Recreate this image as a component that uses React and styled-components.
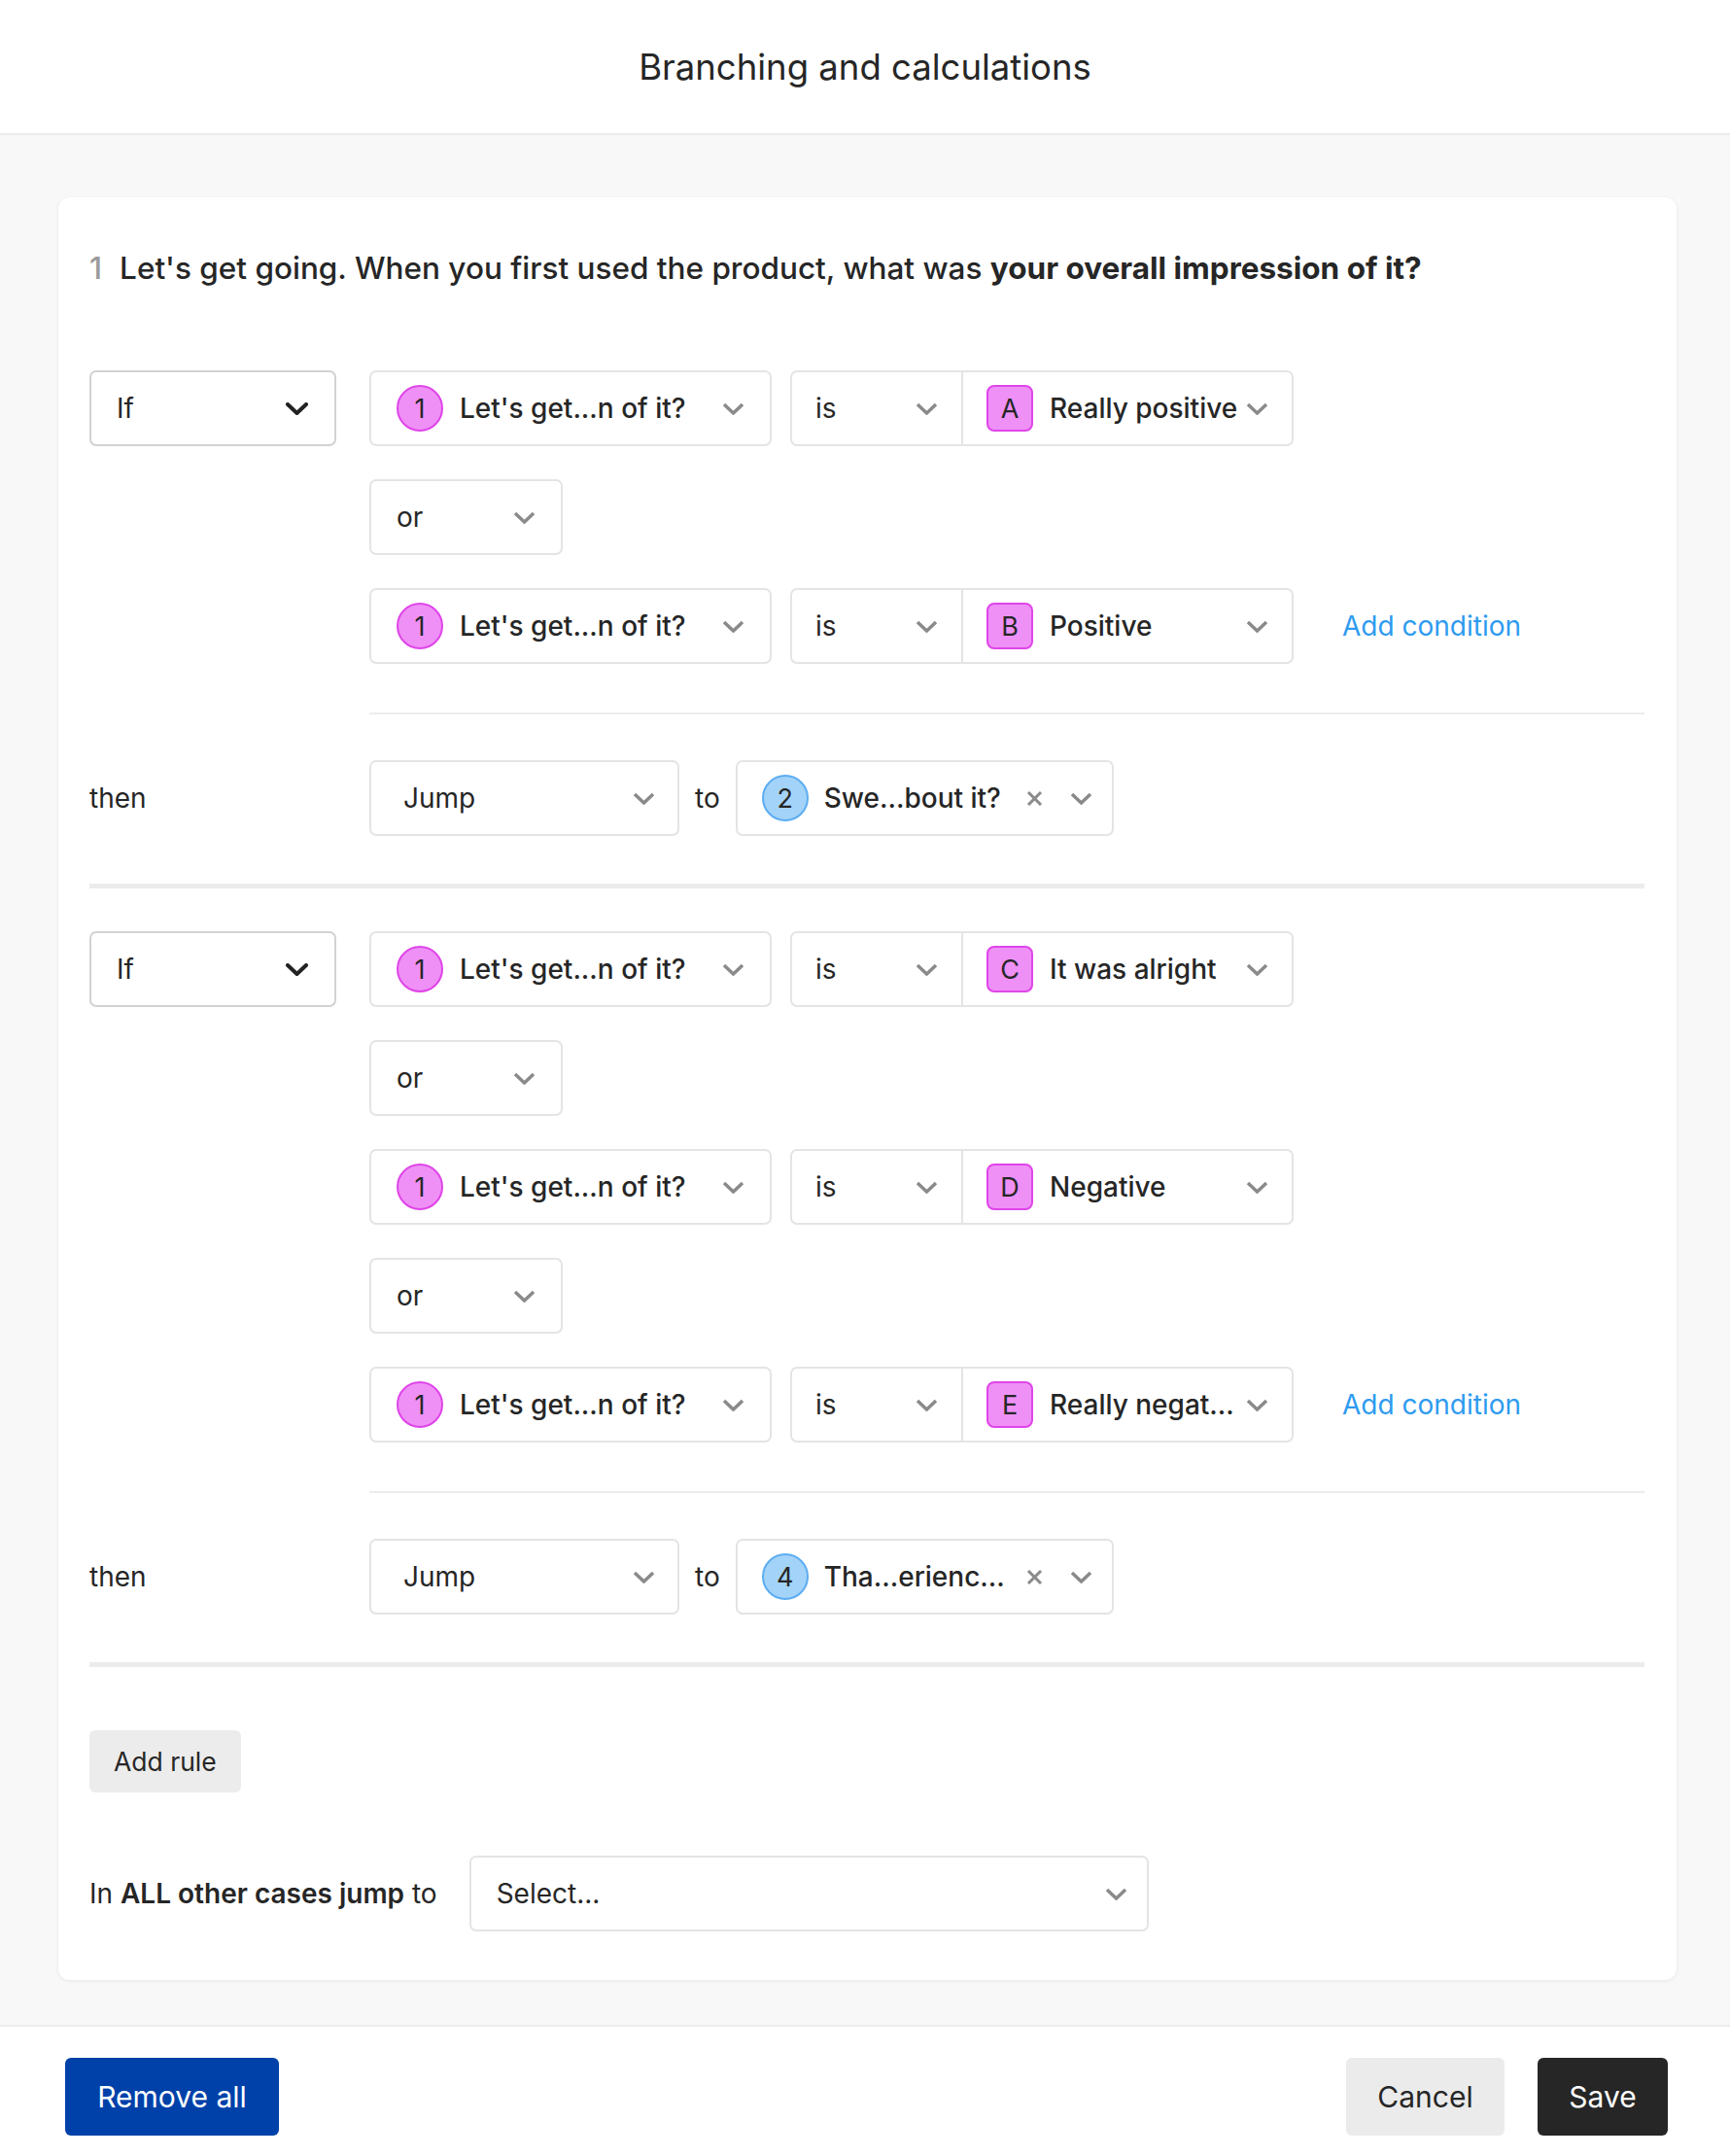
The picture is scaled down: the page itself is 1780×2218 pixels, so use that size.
import React from 'react'
import styled, { createGlobalStyle } from 'styled-components'

const GlobalStyle = createGlobalStyle`
  body {
    margin: 0;
    background: #f8f8f8;
    font-family: Inter, "Noto Sans", sans-serif;
    color: #262626;
  }
`

const Page = styled.div`
  display: flex;
  flex-direction: column;
  min-height: 2218px;
`

const Header = styled.header`
  height: 137px;
  background: #fff;
  border-bottom: 2px solid #ececec;
  display: flex;
  align-items: center;
  justify-content: center;
`

const Title = styled.h1`
  margin: 0;
  font-size: 36.5px;
  font-weight: 400;
  color: #262626;
`

const Main = styled.main`
  flex: 1;
  padding: 64px 55px 45px 60px;
`

const Card = styled.section`
  background: #fff;
  border-radius: 12px;
  box-shadow: 0 1px 4px rgba(0, 0, 0, 0.07);
  padding: 53px 33px 50px 32px;
`

const Question = styled.h2`
  margin: 0 0 85px;
  font-size: 31.5px;
  line-height: 40px;
  font-weight: 500;
  color: #262626;
  white-space: nowrap;

  b {
    font-weight: 700;
  }
`

const QNum = styled.span`
  color: #9b9b9b;
  margin-right: 18px;
`

const RuleBlock = styled.div`
  display: flex;
  flex-direction: column;
`

const RuleGrid = styled.div`
  display: grid;
  grid-template-columns: 288px 1fr;
  align-items: start;
`

const Conditions = styled.div`
  display: flex;
  flex-direction: column;
  gap: 34px;
`

const ConditionRow = styled.div`
  display: flex;
  align-items: center;
  gap: 19px;
`

const SelectBox = styled.div`
  box-sizing: border-box;
  display: flex;
  align-items: center;
  width: ${p => p.$w};
  height: 78px;
  padding: 0 ${p => p.$pr || '26px'} 0 ${p => p.$pl || '26px'};
  border: 2px solid ${p => (p.$strong ? '#d2d2d2' : '#e4e4e4')};
  border-radius: 7px;
  background: #fff;
  font-size: 28px;
  font-weight: ${p => (p.$medium ? 500 : 400)};
  color: #262626;
  flex-shrink: 0;
`

const Compare = styled.div`
  box-sizing: border-box;
  display: flex;
  width: 518px;
  height: 78px;
  border: 2px solid #e4e4e4;
  border-radius: 7px;
  background: #fff;
  font-size: 28px;
  flex-shrink: 0;
`

const ComparePart = styled.div`
  box-sizing: border-box;
  display: flex;
  align-items: center;
  width: ${p => p.$w || 'auto'};
  flex: ${p => (p.$w ? '0 0 auto' : '1')};
  padding: 0 24px 0 ${p => p.$pl || '24px'};
  font-weight: ${p => (p.$medium ? 500 : 400)};
  border-right: ${p => (p.$divider ? '2px solid #e4e4e4' : 'none')};
  min-width: 0;
`

const Text = styled.span`
  flex: 1;
  min-width: 0;
  padding-right: 8px;
  white-space: nowrap;
  overflow: hidden;
`

const Badge = styled.span`
  box-sizing: border-box;
  display: inline-flex;
  align-items: center;
  justify-content: center;
  width: 48px;
  height: 48px;
  flex-shrink: 0;
  margin-right: ${p => p.$gap || '17px'};
  border-radius: ${p => (p.$square ? '8px' : '50%')};
  border: 2px solid ${p => (p.$blue ? '#5cadf2' : '#df45e9')};
  background: ${p => (p.$blue ? '#a3d3f8' : '#ef90f6')};
  font-size: 27px;
  font-weight: 400;
  color: #262626;
`

const AddLink = styled.a`
  margin-left: 31px;
  font-size: 28px;
  color: #2e9bf0;
  cursor: pointer;
  white-space: nowrap;
`

const Divider = styled.div`
  height: 2px;
  background: #ececec;
  margin: ${p => p.$top} 0 47px 288px;
`

const ThenRow = styled.div`
  display: grid;
  grid-template-columns: 288px 1fr;
  align-items: center;
  font-size: 28px;
`

const Target = styled.div`
  display: flex;
  align-items: center;
  gap: 16px;
`

const RuleSeparator = styled.div`
  height: 5px;
  background: #ececec;
  margin: 49px 0 ${p => p.$bottom};
`

const GrayButton = styled.button`
  align-self: flex-start;
  height: 64px;
  margin-top: 65px;
  padding: 0 25px;
  border: none;
  border-radius: 6px;
  background: #ececec;
  font-family: inherit;
  font-size: 26.5px;
  color: #262626;
`

const Fallback = styled.div`
  display: flex;
  align-items: center;
  gap: 33px;
  margin-top: 65px;
  font-size: 28px;

  b {
    font-weight: 600;
  }
`

const Footer = styled.footer`
  background: #fff;
  border-top: 2px solid #ececec;
  padding: 32px 64px 21px 67px;
  display: flex;
  align-items: center;
  gap: 34px;
`

const FooterButton = styled.button`
  box-sizing: border-box;
  width: ${p => p.$w};
  height: 80px;
  padding: 0;
  border: none;
  border-radius: 6px;
  font-family: inherit;
  font-size: 30px;
  background: ${p => p.$bg};
  color: ${p => p.$fg};
  margin-right: ${p => (p.$push ? 'auto' : '0')};
`

const ChevronSvg = styled.svg`
  width: 23px;
  height: 13px;
  flex-shrink: 0;
  fill: none;
  stroke: ${p => (p.$dark ? '#222' : '#8a8a8a')};
  stroke-width: ${p => (p.$dark ? 4 : 3.5)};
  stroke-linecap: ${p => (p.$dark ? 'round' : 'butt')};
`

const Chevron = ({ dark }) => (
  <ChevronSvg viewBox="0 0 23 13" $dark={dark}>
    <polyline points="2,2 11.5,11 21,2" />
  </ChevronSvg>
)

const ClearSvg = styled.svg`
  width: 17px;
  height: 17px;
  flex-shrink: 0;
  stroke: #8a8a8a;
  stroke-width: 3;
  margin: 0 28px 0 6px;
`

const Clear = () => (
  <ClearSvg viewBox="0 0 17 17">
    <line x1="2" y1="2" x2="15" y2="15" />
    <line x1="15" y1="2" x2="2" y2="15" />
  </ClearSvg>
)

const Condition = ({ letter, answer, last }) => (
  <ConditionRow>
    <SelectBox $w="414px" $medium>
      <Badge>1</Badge>
      <Text>Let's get...n of it?</Text>
      <Chevron />
    </SelectBox>
    <Compare>
      <ComparePart $w="176px" $divider>
        <Text>is</Text>
        <Chevron />
      </ComparePart>
      <ComparePart $medium>
        <Badge $square>{letter}</Badge>
        <Text>{answer}</Text>
        <Chevron />
      </ComparePart>
    </Compare>
    {last && <AddLink>Add condition</AddLink>}
  </ConditionRow>
)

const Rule = ({ answers, targetNum, targetText, bottom }) => (
  <RuleBlock>
    <RuleGrid>
      <SelectBox $w="254px" $strong $pr="27px">
        <Text>If</Text>
        <Chevron dark />
      </SelectBox>
      <Conditions>
        {answers.map(([letter, answer], i) => (
          <React.Fragment key={letter}>
            {i > 0 && (
              <SelectBox $w="199px">
                <Text>or</Text>
                <Chevron />
              </SelectBox>
            )}
            <Condition letter={letter} answer={answer} last={i === answers.length - 1} />
          </React.Fragment>
        ))}
      </Conditions>
    </RuleGrid>
    <Divider $top="50px" />
    <ThenRow>
      <span>then</span>
      <Target>
        <SelectBox $w="319px" $pl="33px" $pr="23px">
          <Text>Jump</Text>
          <Chevron />
        </SelectBox>
        <span>to</span>
        <SelectBox $w="389px" $medium $pr="20px" $pl="25px">
          <Badge $blue $gap="16px">{targetNum}</Badge>
          <Text>{targetText}</Text>
          <Clear />
          <Chevron />
        </SelectBox>
      </Target>
    </ThenRow>
    <RuleSeparator $bottom={bottom} />
  </RuleBlock>
)

export default function App() {
  return (
    <Page>
      <GlobalStyle />
      <Header>
        <Title>Branching and calculations</Title>
      </Header>
      <Main>
        <Card>
          <Question>
            <QNum>1</QNum>
            Let's get going. When you first used the product, what was <b>your overall impression of it?</b>
          </Question>
          <Rule
            answers={[['A', 'Really positive'], ['B', 'Positive']]}
            targetNum="2"
            targetText="Swe...bout it?"
            bottom="44px"
          />
          <Rule
            answers={[['C', 'It was alright'], ['D', 'Negative'], ['E', 'Really negat...']]}
            targetNum="4"
            targetText="Tha...erienc..."
            bottom="0"
          />
          <GrayButton>Add rule</GrayButton>
          <Fallback>
            <span>
              In <b>ALL other cases jump</b> to
            </span>
            <SelectBox $w="699px" $pr="20px">
              <Text>Select...</Text>
              <Chevron />
            </SelectBox>
          </Fallback>
        </Card>
      </Main>
      <Footer>
        <FooterButton $w="220px" $bg="#0041a9" $fg="#fff" $push>Remove all</FooterButton>
        <FooterButton $w="163px" $bg="#ebebeb" $fg="#262626">Cancel</FooterButton>
        <FooterButton $w="134px" $bg="#262626" $fg="#fff">Save</FooterButton>
      </Footer>
    </Page>
  )
}
